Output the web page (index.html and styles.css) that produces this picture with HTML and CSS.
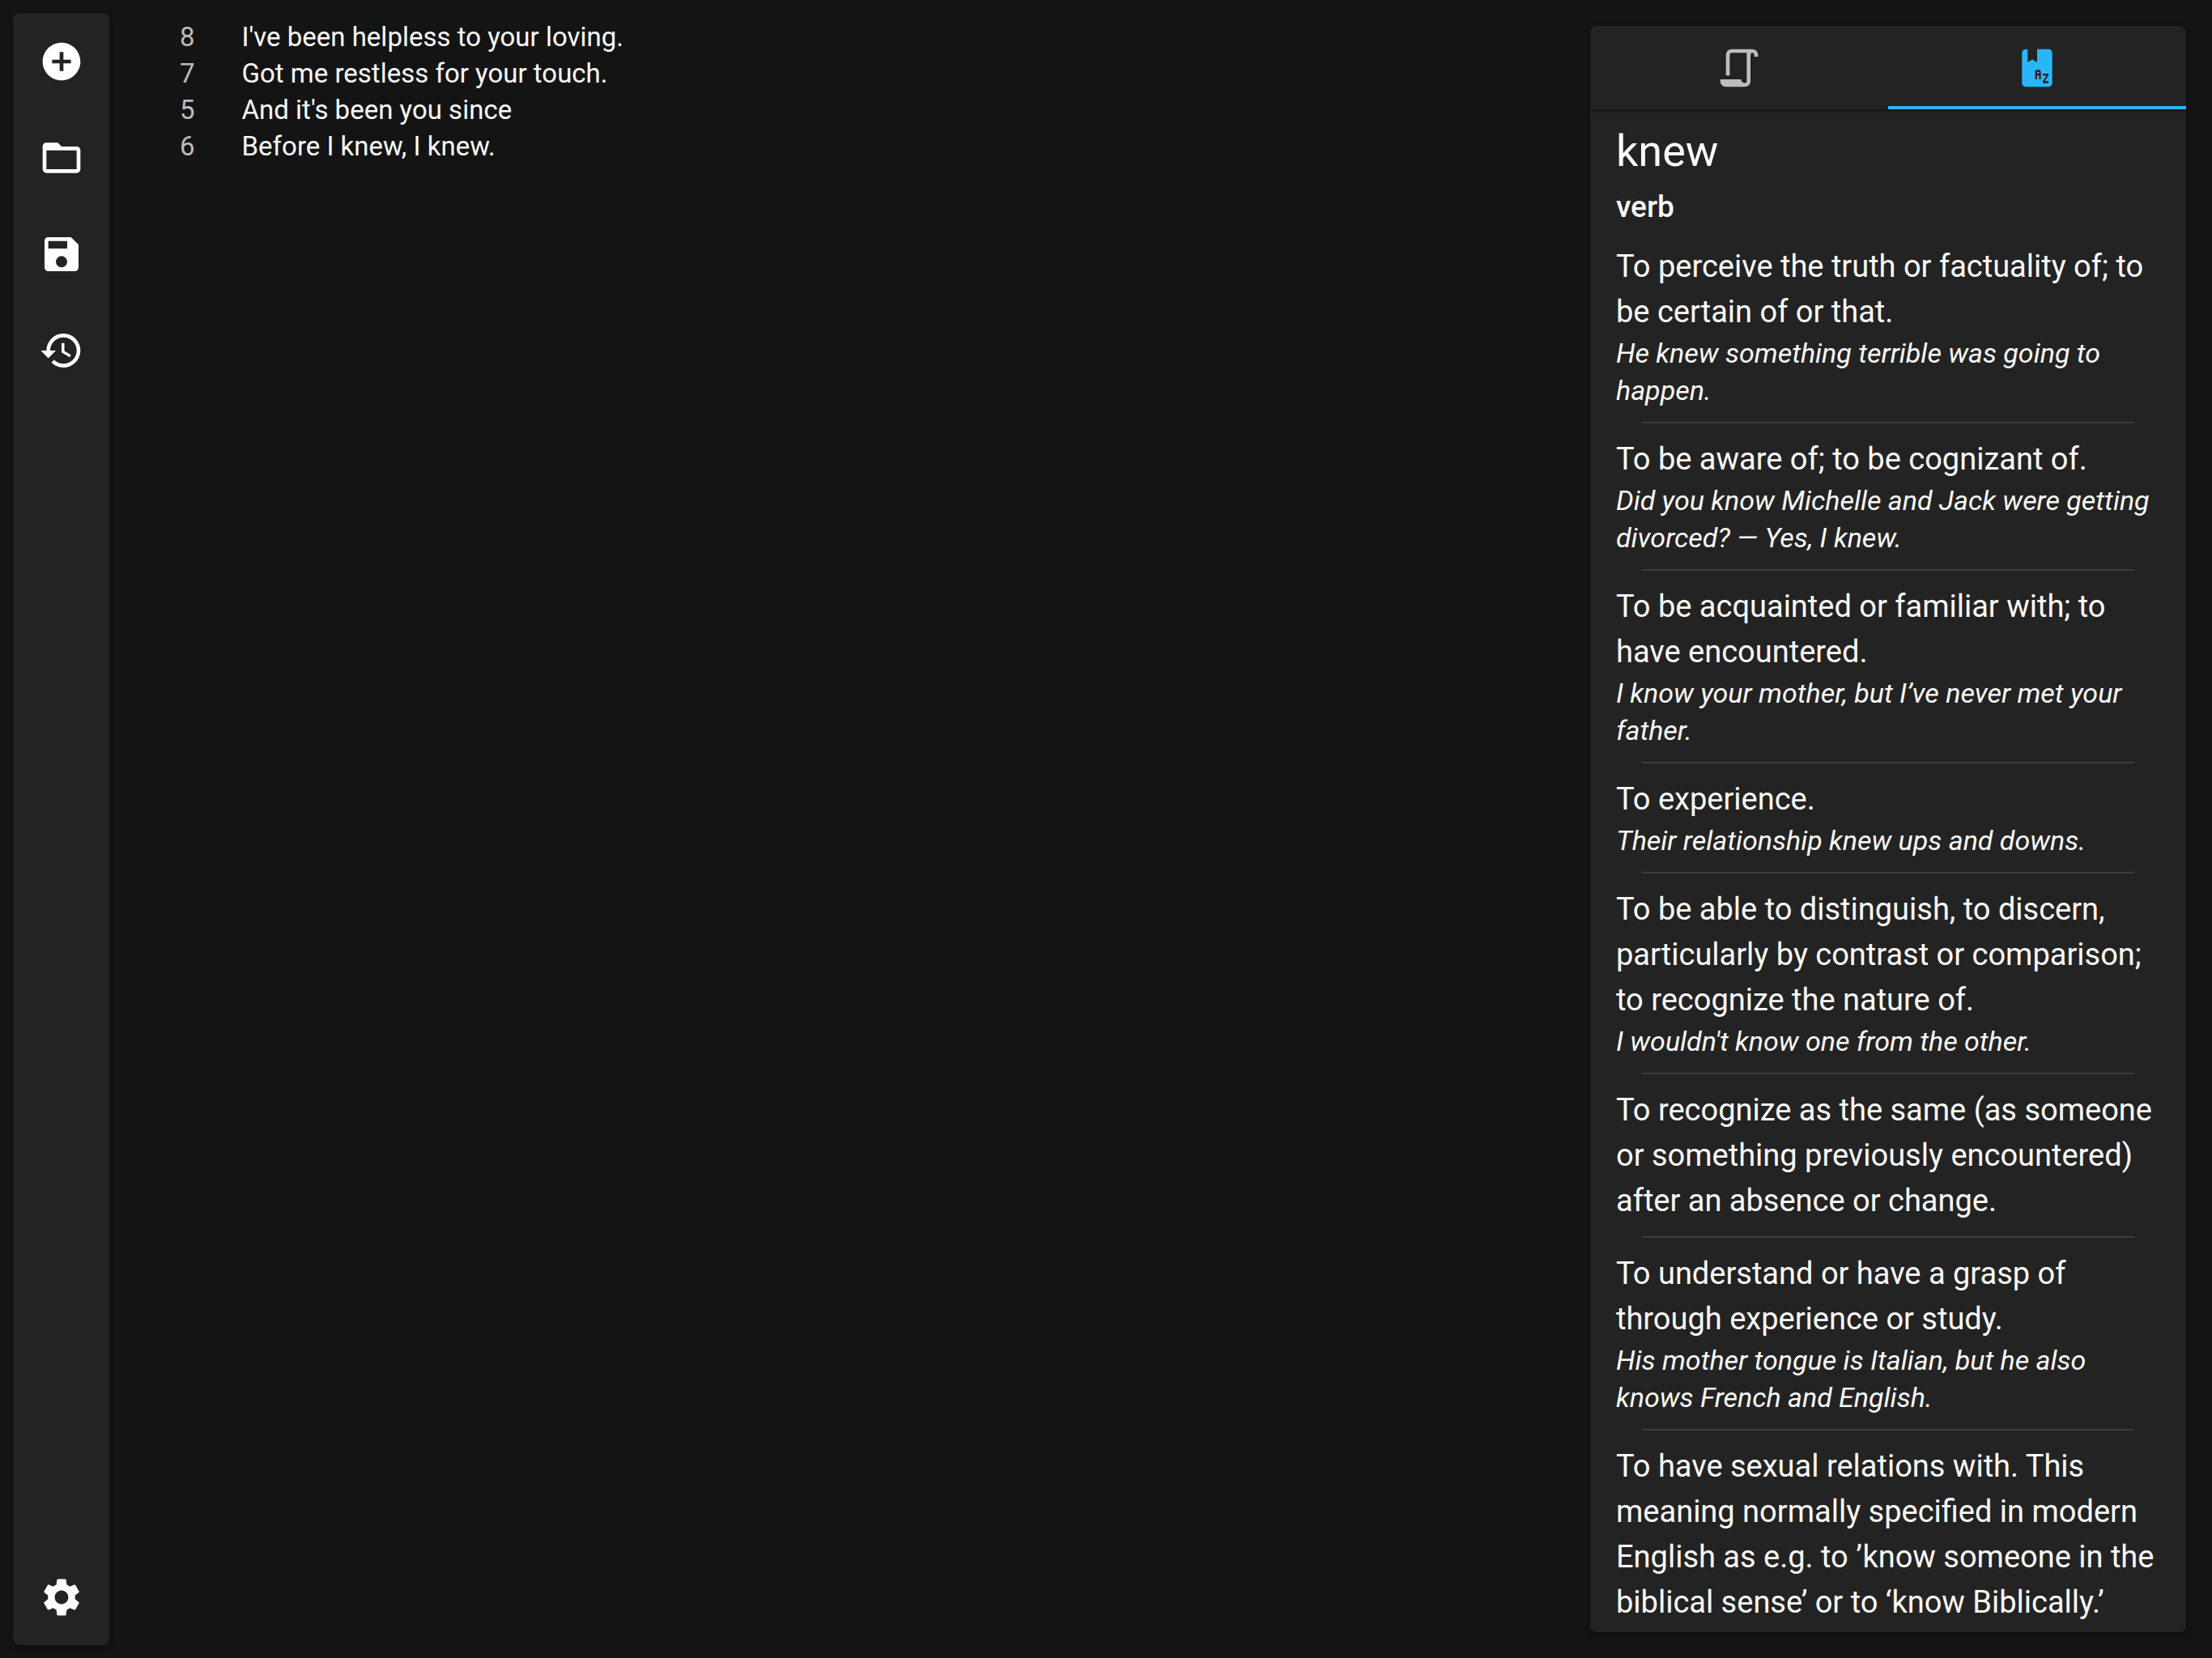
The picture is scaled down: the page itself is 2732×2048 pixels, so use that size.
FILE: index.html
```html
<!DOCTYPE html>
<html lang="en">
<head>
<meta charset="utf-8">
<title>Lyrics editor</title>
<link rel="stylesheet" href="styles.css">
</head>
<body>
<div class="app">
  <nav class="rail" aria-label="Main">
    <button class="rail-button" type="button" aria-label="New">
      <svg class="icon" viewBox="0 0 24 24"><path d="M12 2C6.48 2 2 6.48 2 12s4.48 10 10 10 10-4.48 10-10S17.52 2 12 2zm5 11h-4v4h-2v-4H7v-2h4V7h2v4h4v2z"/></svg>
    </button>
    <button class="rail-button" type="button" aria-label="Open">
      <svg class="icon" viewBox="0 0 24 24"><path d="M20,18H4V8H20M20,6H12L10,4H4C2.89,4 2,4.89 2,6V18A2,2 0 0,0 4,20H20A2,2 0 0,0 22,18V8C22,6.89 21.1,6 20,6Z"/></svg>
    </button>
    <button class="rail-button" type="button" aria-label="Save">
      <svg class="icon" viewBox="0 0 24 24"><path d="M15,9H5V5H15M12,19A3,3 0 0,1 9,16A3,3 0 0,1 12,13A3,3 0 0,1 15,16A3,3 0 0,1 12,19M17,3H5C3.89,3 3,3.9 3,5V19A2,2 0 0,0 5,21H19A2,2 0 0,0 21,19V7L17,3Z"/></svg>
    </button>
    <button class="rail-button" type="button" aria-label="History">
      <svg class="icon" viewBox="0 0 24 24"><path d="M13.5,8H12V13L16.28,15.54L17,14.33L13.5,12.25V8M13,3A9,9 0 0,0 4,12H1L4.96,16.03L9,12H6A7,7 0 0,1 13,5A7,7 0 0,1 20,12A7,7 0 0,1 13,19C11.07,19 9.32,18.21 8.06,16.94L6.64,18.36C8.27,20 10.5,21 13,21A9,9 0 0,0 22,12A9,9 0 0,0 13,3"/></svg>
    </button>
    <button class="rail-button rail-button-last" type="button" aria-label="Settings">
      <svg class="icon" viewBox="0 0 24 24"><path d="M19.14,12.94c0.04-0.3,0.06-0.61,0.06-0.94c0-0.32-0.02-0.64-0.07-0.94l2.03-1.58c0.18-0.14,0.23-0.41,0.12-0.61l-1.92-3.32c-0.12-0.22-0.37-0.29-0.59-0.22l-2.39,0.96c-0.5-0.38-1.03-0.7-1.62-0.94L14.4,2.81c-0.04-0.24-0.24-0.41-0.48-0.41h-3.84c-0.24,0-0.43,0.17-0.47,0.41L9.25,5.35C8.66,5.59,8.12,5.92,7.63,6.29L5.24,5.33c-0.22-0.08-0.47,0-0.59,0.22L2.74,8.87C2.62,9.08,2.66,9.34,2.86,9.48l2.03,1.58C4.84,11.36,4.8,11.69,4.8,12s0.02,0.64,0.07,0.94l-2.03,1.58c-0.18,0.14-0.23,0.41-0.12,0.61l1.92,3.32c0.12,0.22,0.37,0.29,0.59,0.22l2.39-0.96c0.5,0.38,1.03,0.7,1.62,0.94l0.36,2.54c0.05,0.24,0.24,0.41,0.48,0.41h3.84c0.24,0,0.44-0.17,0.47-0.41l0.36-2.54c0.59-0.24,1.13-0.56,1.62-0.94l2.39,0.96c0.22,0.08,0.47,0,0.59-0.22l1.92-3.32c0.12-0.22,0.07-0.47-0.12-0.61L19.14,12.94z M12,15.6c-1.98,0-3.6-1.62-3.6-3.6s1.62-3.6,3.6-3.6s3.6,1.62,3.6,3.6S13.98,15.6,12,15.6z"/></svg>
    </button>
  </nav>

  <main class="editor">
    <div class="gutter">
      <span>8</span>
      <span>7</span>
      <span>5</span>
      <span>6</span>
    </div>
    <textarea class="lyrics" aria-label="Lyrics" spellcheck="false">I've been helpless to your loving.
Got me restless for your touch.
And it's been you since
Before I knew, I knew.</textarea>
  </main>

  <aside class="panel">
    <div class="tabs" role="tablist">
      <button class="tab" type="button" role="tab" aria-selected="false" aria-label="Rhymes">
        <svg class="icon" viewBox="0 0 24 24"><path d="M15,20A1,1 0 0,0 16,19V4H8A1,1 0 0,0 7,5V16H5V5A3,3 0 0,1 8,2H19A3,3 0 0,1 22,5V6H20V5A1,1 0 0,0 19,4A1,1 0 0,0 18,5V19A3,3 0 0,1 15,22H5A3,3 0 0,1 2,19V18H13A2,2 0 0,0 15,20Z"/></svg>
      </button>
      <button class="tab tab-active" type="button" role="tab" aria-selected="true" aria-label="Dictionary">
        <svg class="icon" viewBox="0 0 24 24"><path d="M5.81 2C4.83 2.09 4 3 4 4V20C4 21.05 4.95 22 6 22H18C19.05 22 20 21.05 20 20V4C20 2.89 19.1 2 18 2H12V9L9.5 7.5L7 9V2H6C5.94 2 5.87 2 5.81 2M12 13H13A1 1 0 0 1 14 14V18H13V16H12V18H11V14A1 1 0 0 1 12 13M12 14V15H13V14H12M15 15H18V16L16 19H18V20H15V19L17 16H15V15Z"/></svg>
      </button>
    </div>
    <div class="entry" role="tabpanel" aria-label="Dictionary">
      <h1 class="word">knew</h1>
      <h2 class="part">verb</h2>
      <ul class="senses">
        <li class="sense">
          <p class="definition">To perceive the truth or factuality of; to be certain of or that.</p>
          <p class="example">He knew something terrible was going to happen.</p>
        </li>
        <li class="sense">
          <p class="definition">To be aware of; to be cognizant of.</p>
          <p class="example">Did you know Michelle and Jack were getting divorced? — Yes, I knew.</p>
        </li>
        <li class="sense">
          <p class="definition">To be acquainted or familiar with; to have encountered.</p>
          <p class="example">I know your mother, but I’ve never met your father.</p>
        </li>
        <li class="sense">
          <p class="definition">To experience.</p>
          <p class="example">Their relationship knew ups and downs.</p>
        </li>
        <li class="sense">
          <p class="definition">To be able to distinguish, to discern, particularly by contrast or comparison; to recognize the nature of.</p>
          <p class="example">I wouldn't know one from the other.</p>
        </li>
        <li class="sense">
          <p class="definition">To recognize as the same (as someone or something previously encountered) after an absence or change.</p>
        </li>
        <li class="sense">
          <p class="definition">To understand or have a grasp of through experience or study.</p>
          <p class="example">His mother tongue is Italian, but he also knows French and English.</p>
        </li>
        <li class="sense">
          <p class="definition">To have sexual relations with. This meaning normally specified in modern English as e.g. to ’know someone in the biblical sense’ or to ‘know Biblically.’</p>
        </li>
      </ul>
    </div>
  </aside>
</div>
</body>
</html>
```
FILE: styles.css
```css
* {
  box-sizing: border-box;
}

body {
  margin: 0;
  background: #141414;
  color: #fafafa;
  font-family: Roboto, "Liberation Sans", sans-serif;
}

h1, h2, p, ul {
  margin: 0;
  padding: 0;
}

button {
  display: flex;
  align-items: center;
  justify-content: center;
  padding: 0;
  border: 0;
  background: none;
  color: inherit;
}

.app {
  display: flex;
  height: 100vh;
}

.icon {
  width: 56px;
  height: 56px;
  fill: currentColor;
}

/* Left rail */
.rail {
  display: flex;
  flex-direction: column;
  flex: none;
  width: 119px;
  margin: 16px;
  border-radius: 8px;
  background: #232323;
  color: #fff;
  box-shadow: 0 2px 6px rgba(0, 0, 0, 0.4);
}

.rail-button {
  height: 119px;
}

.rail-button-last {
  margin-top: auto;
}

/* Lyrics editor */
.editor {
  display: flex;
  flex: 1;
  gap: 58px;
  min-width: 0;
  padding: 23px 0 23px 71px;
  font-size: 33px;
  line-height: 45px;
}

.gutter {
  display: flex;
  flex-direction: column;
  color: #bcbcbc;
}

.lyrics {
  flex: 1;
  min-width: 0;
  padding: 0;
  border: 0;
  outline: 0;
  resize: none;
  background: none;
  color: inherit;
  font: inherit;
}

/* Reference panel */
.panel {
  display: flex;
  flex-direction: column;
  flex: none;
  width: 736px;
  margin: 32px;
  overflow: hidden;
  border-radius: 8px;
  background: #232323;
  box-shadow: 0 2px 6px rgba(0, 0, 0, 0.4);
}

.tabs {
  display: flex;
  flex: none;
  height: 103px;
  box-shadow: 0 2px 4px rgba(0, 0, 0, 0.5);
}

.tab {
  flex: 1;
  padding-top: 4px;
  border-bottom: 4px solid transparent;
  color: #bdbdbd;
}

.tab-active {
  border-color: #29b6f6;
  color: #29b6f6;
}

.entry {
  flex: 1;
  min-height: 0;
  padding: 14px 32px 0;
  overflow-y: auto;
  scrollbar-width: none;
}

.word {
  font-size: 54px;
  font-weight: 400;
  line-height: 76px;
}

.part {
  margin-bottom: 14px;
  font-size: 37px;
  font-weight: 500;
  line-height: 62px;
}

.senses {
  list-style: none;
}

.sense + .sense::before {
  content: "";
  display: block;
  height: 2px;
  margin: 16px 32px;
  background: #3d3d3d;
}

.definition {
  font-size: 38px;
  line-height: 56px;
}

.example {
  font-size: 34px;
  font-style: italic;
  line-height: 46px;
}
```
